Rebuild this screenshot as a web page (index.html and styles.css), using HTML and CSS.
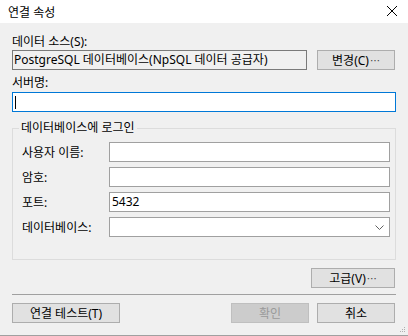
FILE: index.html
```html
<!DOCTYPE html>
<html lang="ko">
<head>
    <meta charset="UTF-8">
    <title>연결 속성</title>
    <link rel="stylesheet" href="styles.css">
</head>
<body>
    <div class="dialog">
        <!-- Title bar -->
        <div class="titlebar">
            <span class="title">연결 속성</span>
            <svg class="close" width="12" height="12" viewBox="0 0 12 12">
                <path d="M1 1 L11 11 M11 1 L1 11" stroke="#000" stroke-width="1" fill="none"/>
            </svg>
        </div>

        <div class="content">
            <div class="label">데이터 소스(S):</div>
            <div class="source-row">
                <div class="textbox readonly">PostgreSQL 데이터베이스(NpSQL 데이터 공급자)</div>
                <button class="btn change">변경(C)<span class="dots">⋯</span></button>
            </div>

            <div class="label">서버명:</div>
            <div class="textbox focused"><span class="caret"></span></div>

            <!-- Login group -->
            <fieldset class="group">
                <legend>데이터베이스에 로그인</legend>
                <div class="field">
                    <span class="field-label">사용자 이름:</span>
                    <div class="textbox input"></div>
                </div>
                <div class="field">
                    <span class="field-label">암호:</span>
                    <div class="textbox input"></div>
                </div>
                <div class="field">
                    <span class="field-label">포트:</span>
                    <div class="textbox input">5432</div>
                </div>
                <div class="field">
                    <span class="field-label">데이터베이스:</span>
                    <div class="textbox input combo">
                        <svg class="chevron" width="9" height="5" viewBox="0 0 9 5">
                            <path d="M0.5 0.5 L4.5 4.5 L8.5 0.5" stroke="#606060" stroke-width="1" fill="none"/>
                        </svg>
                    </div>
                </div>
            </fieldset>

            <div class="advanced-row">
                <button class="btn advanced">고급(V)<span class="dots">⋯</span></button>
            </div>

            <hr class="separator">

            <div class="bottom-row">
                <button class="btn test">연결 테스트(T)</button>
                <div class="right-buttons">
                    <button class="btn ok" disabled>확인</button>
                    <button class="btn cancel">취소</button>
                </div>
            </div>
        </div>
        <svg class="grip" width="6" height="6" viewBox="0 0 6 6">
            <rect x="4" y="0" width="1" height="1" fill="#b0b0b0"/>
            <rect x="2" y="2" width="1" height="1" fill="#b0b0b0"/>
            <rect x="4" y="2" width="1" height="1" fill="#b0b0b0"/>
            <rect x="0" y="4" width="1" height="1" fill="#b0b0b0"/>
            <rect x="2" y="4" width="1" height="1" fill="#b0b0b0"/>
            <rect x="4" y="4" width="1" height="1" fill="#b0b0b0"/>
        </svg>
    </div>
</body>
</html>
```

FILE: styles.css
```css
/* Base */
body, html {
    margin: 0;
    padding: 0;
    font-family: 'Noto Sans', 'Noto Sans CJK KR', sans-serif;
    font-size: 12px;
    color: #000;
}

.dialog {
    width: 408px;
    height: 336px;
    box-sizing: border-box;
    background: #f0f0f0;
    border-bottom: 1px solid #a0a0a0;
    display: flex;
    flex-direction: column;
    overflow: hidden;
    position: relative;
}

/* Title bar */
.titlebar {
    height: 23px;
    background: #fff;
    display: flex;
    align-items: center;
    justify-content: space-between;
    padding: 0 10px 0 8px;
    flex-shrink: 0;
}

.title {
    font-size: 12px;
}

.close {
    margin-top: -1px;
}

/* Content */
.content {
    padding: 11px 12px 0 12px;
    display: flex;
    flex-direction: column;
}

.label {
    height: 16px;
    line-height: 16px;
}

.textbox {
    box-sizing: border-box;
    height: 20px;
    border: 1px solid #7a7a7a;
    background: #fff;
    line-height: 18px;
    padding-left: 2px;
    white-space: nowrap;
    overflow: hidden;
}

.textbox.readonly {
    background: #f0f0f0;
    flex: 0 0 295px;
    padding-left: 1px;
}

.textbox.focused {
    border-color: #0078d7;
    margin-top: 1px;
    display: flex;
    align-items: center;
}

.caret {
    width: 1px;
    height: 13px;
    background: #000;
}

.source-row {
    display: flex;
    gap: 10px;
    margin: 0 0 5px 0;
}

/* Buttons */
.btn {
    box-sizing: border-box;
    height: 20px;
    background: #e1e1e1;
    border: 1px solid #adadad;
    font-family: inherit;
    font-size: 12px;
    padding: 0;
    color: #000;
}

.dots {
    font-family: 'Noto Sans CJK KR', sans-serif;
    font-size: 10px;
    color: #404040;
    margin-left: 1px;
}

.btn.change {
    width: 78px;
}

.btn.advanced {
    width: 84px;
}

.btn.test {
    width: 108px;
}

.btn.ok {
    width: 78px;
    background: #cccccc;
    border-color: #bfbfbf;
    color: #9a9a9a;
}

.btn.cancel {
    width: 78px;
}

/* Group box */
.group {
    margin: 9px 0 0 0;
    padding: 7px 5px 22px 9px;
    border: 1px solid #dcdcdc;
    display: flex;
    flex-direction: column;
    gap: 5px;
    height: 139px;
    box-sizing: border-box;
}

.group legend {
    padding: 0 2px;
    margin-left: -3px;
    line-height: 14px;
}

.field {
    display: flex;
    align-items: center;
}

.field-label {
    width: 87px;
    flex-shrink: 0;
}

.textbox.input {
    flex: 1;
    border-color: #a0a0a0;
}

.textbox.combo {
    display: flex;
    align-items: center;
    justify-content: flex-end;
    padding-right: 5px;
}

.advanced-row {
    display: flex;
    justify-content: flex-end;
    margin-top: 8px;
    padding-right: 1px;
}

.separator {
    margin: 6px 0 0 0;
    border: none;
    border-top: 1px solid #a0a0a0;
    height: 0;
}

.bottom-row {
    display: flex;
    justify-content: space-between;
    margin-top: 8px;
    padding-right: 1px;
}

.right-buttons {
    display: flex;
    gap: 8px;
}

/* Resize grip in the corner */
.grip {
    position: absolute;
    right: 2px;
    bottom: 2px;
}
```
